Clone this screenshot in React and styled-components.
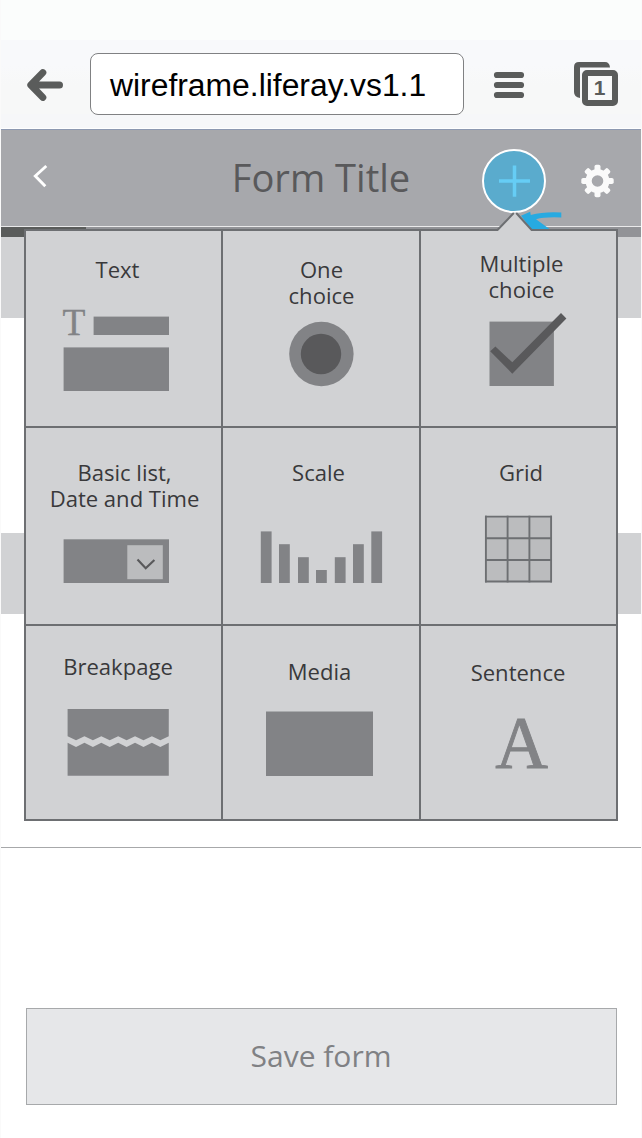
import React from "react";
import styled, { createGlobalStyle } from "styled-components";

const Global = createGlobalStyle`
  *, *::before, *::after { box-sizing: border-box; }
  body { margin: 0; background: #fafafa; }
  svg { display: block; flex: none; }
`;

const SHAPE = "#828386";
const DARK = "#59595b";
const LINE = "#6d6f72";
const PANEL = "#d1d2d4";

const Screen = styled.main`
  position: relative;
  width: 642px;
  height: 1138px;
  padding: 0 1px;
  display: flex;
  flex-direction: column;
  overflow: hidden;
  background: #fafafa;
  font-family: "Open Sans", sans-serif;
`;

const BrowserBar = styled.div`
  height: 128px;
  flex: none;
  display: flex;
  align-items: flex-start;
  padding: 53px 0 0 25px;
  background: linear-gradient(#fbfdfc 0, #fbfdfc 40px, #f8f9fb 40px, #f8f9fb 65px, #f7f8f8 85px, #f7f8f8 114px, #f6f7f9 114px);
`;

const UrlField = styled.div`
  width: 374px;
  height: 62px;
  margin: 0 29px 0 25px;
  padding-left: 19px;
  border: 1px solid #808183;
  border-radius: 8px;
  background: #fff;
  color: #000;
  font: 31.85px/62px "Liberation Sans", Arial, sans-serif;
  white-space: nowrap;
`;

const BarIcon = styled.svg`
  margin-top: ${(p) => p.$top}px;
  margin-right: ${(p) => p.$right || 0}px;
`;

const Header = styled.header`
  height: 99px;
  flex: none;
  display: flex;
  align-items: flex-start;
  padding-left: 31px;
  border-top: 1px solid #fff;
  border-bottom: 1px solid #e9e9ea;
  background: #a7a8ac;
  box-shadow: inset 0 1px 0 #8d99b1;
`;

const HeaderIcon = styled.svg`
  margin-top: ${(p) => p.$top}px;
`;

const Title = styled.h1`
  width: 220px;
  margin: 22px 51px 0 162px;
  text-align: center;
  font-size: 38.1px;
  line-height: 52px;
  font-weight: 400;
  color: #59595b;
  white-space: nowrap;
`;

const AddButton = styled.button`
  width: 64px;
  height: 64px;
  margin: 20px 34px 0 0;
  padding: 0;
  display: flex;
  align-items: center;
  justify-content: center;
  border: 2px solid #fff;
  border-radius: 50%;
  background: #5aabcd;
`;

const Progress = styled.div`
  height: 10px;
  flex: none;
  background: #929397;
`;

const ProgressFill = styled.div`
  width: 85px;
  height: 100%;
  background: #5a5c5b;
`;

const Band = styled.div`
  height: ${(p) => p.$h}px;
  flex: none;
  background: ${(p) => (p.$filled ? PANEL : "#fff")};
  border-bottom: ${(p) => (p.$rule ? "1px solid #a7a8aa" : "0")};
`;

const Footer = styled.footer`
  flex: 1;
  padding: 160px 24px 0 25px;
  background: #fff;
`;

const SaveButton = styled.button`
  display: block;
  width: 591px;
  height: 97px;
  padding: 0 1px 0 0;
  border: 1px solid #a7a9ab;
  background: #e6e7e9;
  color: #808184;
  font: 30px/40px "Open Sans", sans-serif;
`;

const Popover = styled.section`
  position: absolute;
  left: 24px;
  top: 229px;
  width: 594px;
  height: 592px;
  display: grid;
  grid-template-columns: 195px 196px 195px;
  grid-template-rows: 195px 196px 193px;
  gap: 2px;
  border: 2px solid ${LINE};
  background: ${LINE};
`;

const Pointer = styled.svg`
  position: absolute;
  left: 495px;
  top: 209px;
`;

const Cell = styled.div`
  display: flex;
  flex-direction: column;
  background: ${PANEL};
  padding-top: ${(p) => p.$top}px;
`;

const Label = styled.div`
  margin-left: ${(p) => p.$shift * 2}px;
  text-align: center;
  font-size: 22.05px;
  line-height: 26px;
  color: #39393b;
  white-space: pre;
`;

const Art = styled.svg`
  margin: ${(p) => p.$gap}px 0 0 ${(p) => p.$left}px;
`;

const Glyph = styled.text`
  font-family: "Liberation Serif", "Times New Roman", serif;
  font-size: ${(p) => p.$size}px;
  text-anchor: middle;
  fill: ${SHAPE};
  stroke: ${SHAPE};
  stroke-width: ${(p) => p.$weight};
`;

const scaleBars = [
  [260.8, 531.4], [279, 544.2], [298, 557.2], [316, 570],
  [334.8, 557.2], [353, 544.2], [371.3, 531.4],
];

const zigX = Array.from({ length: 13 }, (_, i) => 67.6 + i * 8.43);
const zig = (hi, lo) => zigX.map((x, i) => `${x},${i % 2 ? lo : hi}`);
const gridX = [485.9, 507.6, 529.4, 551.1];
const gridY = [516.6, 538.3, 560, 581.5];

const fields = [
  {
    label: "Text", top: 25, shift: -6, gap: 18, left: 34, box: [60, 300, 110, 92],
    art: (
      <>
        <Glyph x="74" y="334.8" $size={37.5} $weight={0.3}>T</Glyph>
        <rect x="93.6" y="316.6" width="75.4" height="18.4" fill={SHAPE} />
        <rect x="63.6" y="347.4" width="105.4" height="43.6" fill={SHAPE} />
      </>
    ),
  },
  {
    label: "One\nchoice", top: 25, shift: 0.5, gap: 13, left: 66, box: [289, 321, 66, 66],
    art: (
      <>
        <circle cx="321.4" cy="354" r="32.2" fill={SHAPE} />
        <circle cx="321" cy="354" r="20.2" fill={DARK} />
      </>
    ),
  },
  {
    label: "Multiple\nchoice", top: 19, shift: 3, gap: 10, left: 67, box: [488, 312, 80, 76],
    art: (
      <>
        <rect x="489.5" y="321.6" width="64.4" height="64.4" fill={SHAPE} />
        <path d="M490.2 351.2 495.4 346.6 512.3 362.3 561 313 566.4 318.4 512.3 373.7Z" fill={DARK} />
      </>
    ),
  },
  {
    label: "Basic list,\nDate and Time", top: 31, shift: 1, gap: 28, left: 37, box: [63, 539, 107, 45],
    art: (
      <>
        <rect x="63.6" y="539.3" width="105.4" height="43.7" fill={SHAPE} />
        <rect x="127.3" y="545.2" width="35.5" height="34" fill="#bbbcbe" />
        <path d="M137.5 559.6 145.7 568.2 154.4 560" fill="none" stroke={DARK} strokeWidth="2.2" />
      </>
    ),
  },
  {
    label: "Scale", top: 31, shift: -2.5, gap: 46, left: 37, box: [260, 531, 124, 53],
    art: scaleBars.map(([x, y]) => (
      <rect key={x} x={x} y={y} width="10.8" height={583 - y} fill={SHAPE} />
    )),
  },
  {
    label: "Grid", top: 31, shift: 2.5, gap: 30, left: 63, box: [484, 515, 69, 68],
    art: (
      <>
        <rect x="485.9" y="516.6" width="65.2" height="65" fill="#bbbcbe" />
        <g stroke={LINE} strokeWidth="1.9">
          {gridX.map((x) => <line key={x} x1={x} x2={x} y1="515.7" y2="582.4" />)}
          {gridY.map((y) => <line key={y} y1={y} y2={y} x1="485" x2="552" />)}
        </g>
      </>
    ),
  },
  {
    label: "Breakpage", top: 27, shift: -5.5, gap: 29, left: 41, box: [67, 708, 103, 69],
    art: (
      <g fill={SHAPE}>
        <polygon points={["67.6,709", ...zig(736.3, 740.2), "168.8,709"].join(" ")} />
        <polygon points={["67.6,775.8", ...zig(742.8, 747), "168.8,775.8"].join(" ")} />
      </g>
    ),
  },
  {
    label: "Media", top: 32, shift: -1.5, gap: 27, left: 43, box: [266, 711, 108, 66],
    art: <rect x="266" y="711.5" width="107" height="64.5" fill={SHAPE} />,
  },
  {
    label: "Sentence", top: 33, shift: -0.5, gap: 15, left: 69, box: [490, 700, 64, 90],
    art: <Glyph x="521.5" y="768.4" $size={73} $weight={0.9}>A</Glyph>,
  },
];

function FieldCell({ field }) {
  const { label, top, shift, gap, left, box, art } = field;
  return (
    <Cell $top={top}>
      <Label $shift={shift}>{label}</Label>
      <Art $gap={gap} $left={left} width={box[2]} height={box[3]} viewBox={box.join(" ")}>
        {art}
      </Art>
    </Cell>
  );
}

export default function App() {
  return (
    <Screen>
      <Global />
      <BrowserBar>
        <BarIcon $top={14} width="39" height="36" viewBox="26 67 39 36">
          <path d="M59.5 85H34M42.8 72.6 30.8 85 42.8 97.4" fill="none" stroke="#5a5c5b" strokeWidth="7" strokeLinecap="round" strokeLinejoin="round" />
        </BarIcon>
        <UrlField>wireframe.liferay.vs1.1</UrlField>
        <BarIcon $top={17} $right={49} width="32" height="30" viewBox="493 70 32 30">
          <path d="M497 75H521M497 85H521M497 95H521" stroke="#5a5c5b" strokeWidth="6.2" strokeLinecap="round" />
        </BarIcon>
        <BarIcon $top={8} width="46" height="46" viewBox="574 61 46 46">
          <path d="M580 98Q574 97 574 92V67Q574 62 579 62H605Q609.5 62 610 67.5H580Z" fill="#5a5c5b" />
          <rect x="585" y="73" width="30" height="30" rx="2" fill="#f8f9f9" stroke="#5a5c5b" strokeWidth="6" />
          <text x="599.6" y="95.3" textAnchor="middle" fontFamily="Liberation Sans, Arial, sans-serif" fontWeight="700" fontSize="21" fill="#5a5c5b">1</text>
        </BarIcon>
      </BrowserBar>
      <Header>
        <HeaderIcon $top={33} width="17" height="27" viewBox="32 162 17 27">
          <path d="M46.3 166 35.3 176 45.3 186.3" fill="none" stroke="#fff" strokeWidth="2.9" />
        </HeaderIcon>
        <Title>Form Title</Title>
        <AddButton aria-label="Add field">
          <svg width="34" height="34" viewBox="-17.5 -17 34 34">
            <path d="M-15.5 0H15.5M0-15.5V15.8" stroke="#66cdf5" strokeWidth="3.5" />
          </svg>
        </AddButton>
        <HeaderIcon $top={35} width="34" height="34" viewBox="-17.5 -17 34 34">
          <circle r="8.9" fill="none" stroke="#fafafa" strokeWidth="6.2" />
          {[0, 45, 90, 135, 180, 225, 270, 315].map((a) => (
            <rect key={a} x="-3" y="-16.2" width="6" height="7" rx="1.8" fill="#fafafa" transform={`rotate(${a})`} />
          ))}
        </HeaderIcon>
      </Header>
      <Progress><ProgressFill /></Progress>
      <Band $h={81} $filled />
      <Band $h={215.4} />
      <Band $h={80.6} $filled />
      <Band $h={234} $rule />
      <Footer>
        <SaveButton>Save form</SaveButton>
      </Footer>
      <Popover>
        {fields.map((f) => <FieldCell key={f.label} field={f} />)}
      </Popover>
      <Pointer width="70" height="23" viewBox="495 209 70 23">
        <path d="M521 215.8 530.2 211.8 530.8 215Q544 211.6 561.3 212.6V217.4Q545 216.6 536 219.2L549.5 229H531Z" fill="#27aae1" />
        <path d="M497 232V230L513.5 212.5H516L531.7 230V232Z" fill={PANEL} />
        <path d="M496.5 230H497.5L513.8 213M516.2 213 531.6 230H533" fill="none" stroke={LINE} strokeWidth="2" />
      </Pointer>
    </Screen>
  );
}
